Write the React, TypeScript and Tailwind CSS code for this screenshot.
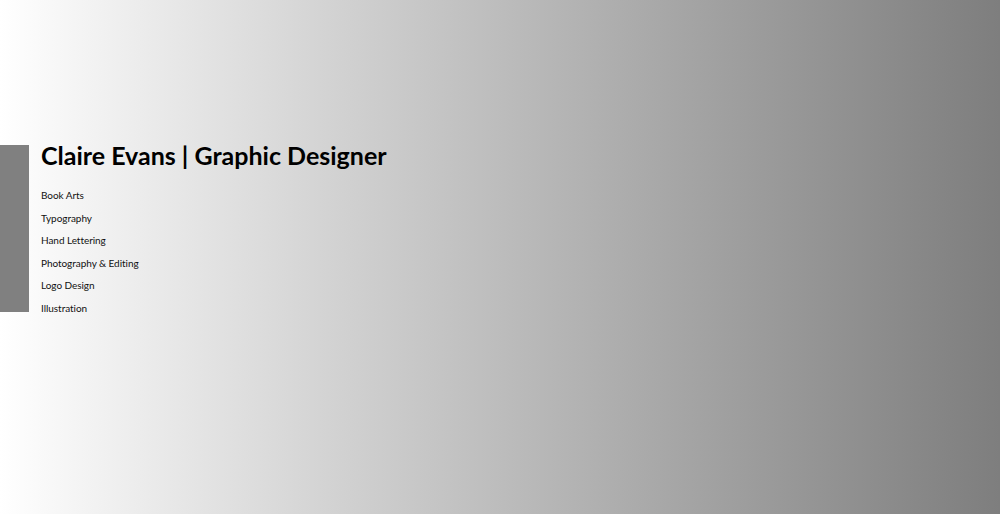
export default function App() {
  const items = ["Book Arts", "Typography", "Hand Lettering", "Photography & Editing", "Logo Design", "Illustration"];
  return (
    <div
      className="w-[1000px] h-[514px] bg-gradient-to-r from-[#ffffff] to-[#7e7e7e] flex flex-col overflow-hidden"
      style={{ fontFamily: "Lato, 'Noto Sans', sans-serif" }}
    >
      <div className="mt-[145px] flex">
        <div className="w-[29px] h-[167px] bg-[#808080]" />
        <div className="ml-[12px] flex flex-col">
          <h1 className="text-[25px] leading-[24px] font-bold text-black mt-[-2px] tracking-[0px]">Claire Evans | Graphic Designer</h1>
          <ul className="mt-[21px] flex flex-col gap-[7.9px]">
            {items.map((t) => (
              <li key={t} className="text-[10px] leading-[14.7px] text-[#111] tracking-[-0.05px]">{t}</li>
            ))}
          </ul>
        </div>
      </div>
    </div>
  );
}
